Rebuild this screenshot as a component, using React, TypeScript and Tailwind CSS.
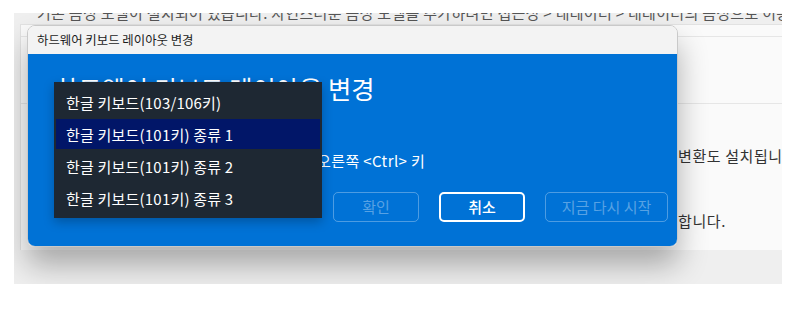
import React from "react"

const font = { fontFamily: '"Noto Sans CJK KR", "Noto Sans", sans-serif' }

const layouts = [
  "한글 키보드(103/106키)",
  "한글 키보드(101키) 종류 1",
  "한글 키보드(101키) 종류 2",
  "한글 키보드(101키) 종류 3",
]

function LayoutMenu() {
  return (
    <div className="absolute left-[26px] top-[28px] w-[268px] bg-[#1e2833] py-[4px] shadow-[0_4px_10px_rgba(0,0,0,0.25)]">
      {layouts.map((label, i) => (
        <div
          key={label}
          className={
            i === 1
              ? "mx-[2px] my-px flex h-[30px] items-center bg-[#011668] pl-[10px] text-[15px] leading-none tracking-[0.2px] text-white"
              : "flex h-[32px] items-center pl-[12px] text-[15px] leading-none tracking-[0.2px] text-white"
          }
        >
          {label}
        </div>
      ))}
    </div>
  )
}

function Dialog() {
  return (
    <div className="absolute left-[13px] top-[12px] w-[651px] overflow-hidden rounded-[8px] border border-[#c9c9c9] shadow-[0_18px_30px_rgba(0,0,0,0.3)]">
      <div className="flex h-[28px] items-center bg-[#f3f3f3] pl-[9px] text-[12.4px] leading-none text-[#1b1b1b]">
        하드웨어 키보드 레이아웃 변경
      </div>
      <div className="relative h-[192px] bg-[#0072d6] px-[27px] pt-[18px]">
        <h1 className="text-[25.3px] leading-[32px] text-white">하드웨어 키보드 레이아웃 변경</h1>
        <div className="mt-[46px] flex h-[20px] items-center text-[15px] leading-none tracking-[0.4px] text-white">
          <span className="w-[262px] shrink-0" />
          <span>오른쪽 &lt;Ctrl&gt; 키</span>
        </div>
        <div className="mt-[22px] flex gap-[20px] pl-[278px]">
          <button className="h-[30px] w-[86px] shrink-0 rounded-[5px] border border-white/30 text-[15px] text-white/35">
            확인
          </button>
          <button className="h-[30px] w-[86px] shrink-0 rounded-[5px] border-2 border-white text-[15px] font-medium text-white">
            취소
          </button>
          <button className="h-[30px] w-[123px] shrink-0 rounded-[5px] border border-white/30 text-[15px] text-white/35">
            지금 다시 시작
          </button>
        </div>
        <LayoutMenu />
      </div>
    </div>
  )
}

export default function App() {
  return (
    <div className="h-[316px] w-[810px] bg-white" style={font}>
      <div className="relative ml-[14px] mt-[13px] h-[271px] w-[768px] overflow-hidden bg-[#efefef]">
        <div className="flex h-[10px] items-end overflow-hidden pl-[23px]">
          <div className="whitespace-nowrap text-[15px] leading-[20px] tracking-[0.3px] text-[#555]">
            기존 음성 모델이 설치되어 있습니다. 자연스러운 음성 모델을 추가하려면 접근성 &gt; 내레이터 &gt; 내레이터의 음성으로 이동하세요.
          </div>
        </div>
        <div className="ml-[6px] mt-[1px] h-[226px] border-l border-t border-[#e2e2e2] bg-[#fafafa]">
          <div className="h-[12px] border-b border-[#e6e6e6]" />
          <div className="h-[67px] border-b border-[#e6e6e6]" />
          <div className="flex items-center whitespace-nowrap pt-[42px] text-[15px] leading-[20px] tracking-[0.6px] text-[#333]">
            <span className="w-[657px] shrink-0" />
            <span>변환도 설치됩니다.</span>
          </div>
          <div className="flex items-center whitespace-nowrap pt-[45px] text-[15px] leading-[20px] tracking-[0.6px] text-[#333]">
            <span className="w-[657px] shrink-0" />
            <span>합니다.</span>
          </div>
        </div>
        <Dialog />
      </div>
    </div>
  )
}
